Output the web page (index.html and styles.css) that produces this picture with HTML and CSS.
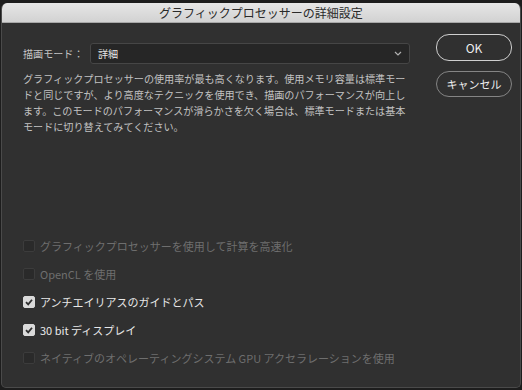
FILE: index.html
```html
<!DOCTYPE html>
<html lang="ja">
<head>
<meta charset="UTF-8">
<meta name="viewport" content="width=device-width, initial-scale=1.0">
<title>グラフィックプロセッサーの詳細設定</title>
<link rel="stylesheet" href="styles.css">
</head>
<body>
<div class="window">
  <div class="titlebar">グラフィックプロセッサーの詳細設定</div>
  <div class="dialog">
    <div class="main">
      <div class="mode-row">
        <label class="mode-label" for="mode">描画モード：</label>
        <div class="select">
          <span class="select-value">詳細</span>
          <svg class="chevron" width="8" height="5" viewBox="0 0 8 5"><path d="M1 1 L4 4 L7 1" fill="none" stroke="#b0b0b0" stroke-width="1.2"/></svg>
        </div>
      </div>
      <p class="description">グラフィックプロセッサーの使用率が最も高くなります。使用メモリ容量は標準モードと同じですが、より高度なテクニックを使用でき、描画のパフォーマンスが向上します。このモードのパフォーマンスが滑らかさを欠く場合は、標準モードまたは基本モードに切り替えてみてください。</p>
      <ul class="options">
        <li class="option disabled"><span class="box"></span>グラフィックプロセッサーを使用して計算を高速化</li>
        <li class="option disabled"><span class="box"></span>OpenCL を使用</li>
        <li class="option"><span class="box checked"><svg width="10" height="10" viewBox="0 0 10 10"><path d="M2 5.2 L4.2 7.4 L8 2.8" fill="none" stroke="#2e2e2e" stroke-width="1.8"/></svg></span>アンチエイリアスのガイドとパス</li>
        <li class="option"><span class="box checked"><svg width="10" height="10" viewBox="0 0 10 10"><path d="M2 5.2 L4.2 7.4 L8 2.8" fill="none" stroke="#2e2e2e" stroke-width="1.8"/></svg></span>30 bit ディスプレイ</li>
        <li class="option disabled"><span class="box"></span>ネイティブのオペレーティングシステム GPU アクセラレーションを使用</li>
      </ul>
    </div>
    <div class="actions">
      <button class="btn default">OK</button>
      <button class="btn">キャンセル</button>
    </div>
  </div>
</div>
</body>
</html>
```

FILE: styles.css
```css
body {
  margin: 0;
  background: #1d1d1d;
  font-family: "Noto Sans CJK JP", "Liberation Sans", sans-serif;
  overflow: hidden;
}
.window {
  margin: 3px 1px 0 1px;
  height: 385px;
  box-sizing: border-box;
  background: #303030;
  border: 1px solid #4a4a4a;
  border-top: none;
  border-radius: 6px 6px 5px 5px;
  overflow: hidden;
}
.titlebar {
  height: 20px;
  box-sizing: border-box;
  background: linear-gradient(#e6e6e6, #d2d2d2);
  border-bottom: 1px solid #a8a8a8;
  color: #2a2a2a;
  font-size: 12px;
  line-height: 20px;
  text-align: center;
}
.dialog {
  display: flex;
}
.main {
  width: 387px;
  padding: 20px 0 0 21px;
}
.mode-row {
  display: flex;
  align-items: center;
  height: 21px;
}
.mode-label {
  width: 67px;
  font-size: 10.1px;
  color: #c4c4c4;
}
.select {
  flex: 1;
  height: 21px;
  box-sizing: border-box;
  display: flex;
  align-items: center;
  justify-content: space-between;
  padding: 0 7px 0 7px;
  background: #262626;
  border: 1px solid #464646;
  border-radius: 3px;
  color: #e6e6e6;
  font-size: 10.1px;
}
.description {
  margin: 7px 0 0 0;
  font-size: 10.1px;
  line-height: 16px;
  color: #c2c2c2;
}
.options {
  list-style: none;
  margin: 97px 0 0 0;
  padding: 0;
}
.option {
  display: flex;
  align-items: center;
  height: 28px;
  font-size: 11px;
  color: #e8e8e8;
  white-space: nowrap;
}
.option.disabled {
  color: #6e6e6e;
}
.box {
  width: 12px;
  height: 12px;
  box-sizing: border-box;
  margin: 0 5px 0 0;
  border: 1px solid #3c3c3c;
  border-radius: 2px;
  background: #2a2a2a;
  display: flex;
  align-items: center;
  justify-content: center;
}
.box.checked {
  background: #dadada;
  border-color: #dadada;
}
.actions {
  width: 76px;
  margin-left: 26px;
  padding-top: 11px;
  display: flex;
  flex-direction: column;
  gap: 10px;
}
.btn {
  height: 26px;
  border-radius: 13px;
  border: 1px solid #858585;
  background: transparent;
  color: #eeeeee;
  font-family: inherit;
  font-size: 11px;
  padding: 0;
}
.btn.default {
  height: 27px;
  border: 1.5px solid #cfcfcf;
  font-size: 12px;
}
```
